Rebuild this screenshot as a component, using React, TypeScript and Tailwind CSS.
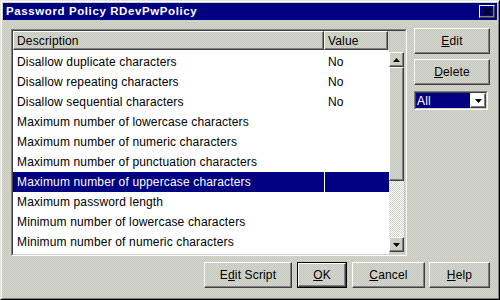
import React from "react";

const rows: { label: string; value?: string }[] = [
  { label: "Disallow duplicate characters", value: "No" },
  { label: "Disallow repeating characters", value: "No" },
  { label: "Disallow sequential characters", value: "No" },
  { label: "Maximum number of lowercase characters" },
  { label: "Maximum number of numeric characters" },
  { label: "Maximum number of punctuation characters" },
  { label: "Maximum number of uppercase characters" },
  { label: "Maximum password length" },
  { label: "Minimum number of lowercase characters" },
  { label: "Minimum number of numeric characters" },
];

const SELECTED = 6;

const raised =
  "border border-t-white border-l-white border-r-[#404040] border-b-[#404040] shadow-[inset_-1px_-1px_#808080]";

function Arrow({ up }: { up?: boolean }) {
  return (
    <svg width="7" height="4" viewBox="0 0 7 4">
      <polygon points={up ? "3.5,0 7,4 0,4" : "0,0 7,0 3.5,4"} fill="#000" />
    </svg>
  );
}

function Button({
  className,
  children,
  isDefault,
}: {
  className: string;
  children: React.ReactNode;
  isDefault?: boolean;
}) {
  if (isDefault) {
    return (
      <div className={`flex border border-black ${className}`}>
        <div className={`flex flex-1 items-center justify-center ${raised}`}>{children}</div>
      </div>
    );
  }
  return <div className={`flex items-center justify-center ${raised} ${className}`}>{children}</div>;
}

export default function App() {
  return (
    <div className="h-[300px] w-[500px] bg-[repeating-conic-gradient(#d6d8cf_0_25%,#c4c8bc_0_50%)] bg-[length:2px_2px] font-['Liberation_Sans',Arial,sans-serif] text-[12px] tracking-[0.15px] text-black">
      {/* window frame */}
      <div className="flex h-full flex-col border border-t-[#e4e4e0] border-l-[#e4e4e0] border-r-black border-b-black">
        <div className="flex flex-1 flex-col border border-t-white border-l-white border-r-[#808080] border-b-[#808080] p-px">
          {/* title bar */}
          <div className="flex h-[17px] items-center justify-between bg-[#000080] pl-[3px] pr-[2px]">
            <span className="text-[11.5px] font-bold tracking-[0.6px] text-white">Password Policy RDevPwPolicy</span>
            <div className={`flex h-[13px] w-[16px] items-center justify-center ${raised}`}>
              <svg width="8" height="7" viewBox="0 0 8 7">
                <path d="M0 0 L8 7 M1 0 L8 6 M0 1 L7 7 M8 0 L0 7 M7 0 L0 6 M8 1 L1 7" stroke="#000" strokeWidth="1" />
              </svg>
            </div>
          </div>

          {/* body */}
          <div className="flex flex-1 flex-col pl-[8px] pr-[7px] pt-[8px]">
            <div className="flex gap-[7px]">
              {/* table */}
              <div className="mt-px h-[227px] w-[396px] border border-t-[#808080] border-l-[#808080] border-r-white border-b-white">
                <div className="flex h-full flex-col border border-t-[#404040] border-l-[#404040] border-r-[#d4d0c8] border-b-[#d4d0c8]">
                  <div className="flex h-[19px]">
                    <div className={`flex w-[311px] items-center pl-[3px] ${raised}`}>Description</div>
                    <div className={`flex w-[64px] items-center pl-[3px] ${raised}`}>Value</div>
                    <div className="flex-1" />
                  </div>
                  <div className="flex flex-1">
                    <div className="flex w-[376px] flex-col bg-white pt-[2px]">
                      {rows.map((r, i) => (
                        <div
                          key={r.label}
                          className={`flex h-[20px] items-center ${i === SELECTED ? "bg-[#000080] text-white" : ""}`}
                        >
                          <div className="w-[311px] pl-[4px] whitespace-nowrap">{r.label}</div>
                          <div className={`h-full w-px ${i === SELECTED ? "bg-white" : ""}`} />
                          <div className="flex-1 pl-[3px]">{r.value}</div>
                        </div>
                      ))}
                    </div>
                    {/* scrollbar */}
                    <div className="flex w-[16px] flex-col py-[2px] pr-px">
                      <div className={`flex h-[15px] items-center justify-center ${raised}`}>
                        <Arrow up />
                      </div>
                      <div className={`h-[114px] ${raised}`} />
                      <div className="flex-1 bg-[repeating-conic-gradient(#ffffff_0_25%,#d0d0c8_0_50%)] bg-[length:2px_2px]" />
                      <div className={`flex h-[15px] items-center justify-center ${raised}`}>
                        <Arrow />
                      </div>
                    </div>
                  </div>
                </div>
              </div>

              {/* right column */}
              <div className="flex w-[76px] flex-col">
                <Button className="h-[26px]">
                  <span>
                    <u>E</u>dit
                  </span>
                </Button>
                <Button className="mt-[5px] h-[26px]">
                  <span>
                    <u>D</u>elete
                  </span>
                </Button>
                <div className="mt-[6px] flex h-[19px] w-[74px] border border-t-[#808080] border-l-[#808080] border-r-white border-b-white">
                  <div className="flex flex-1 border border-t-[#404040] border-l-[#404040] border-r-[#d4d0c8] border-b-[#d4d0c8] bg-white">
                    <div className="flex flex-1 items-center bg-[#000080] pl-[1px] text-white">All</div>
                    <div className={`flex w-[16px] items-center justify-center ${raised}`}>
                      <Arrow />
                    </div>
                  </div>
                </div>
              </div>
            </div>

            {/* bottom buttons */}
            <div className="mt-[6px] flex justify-end gap-[5px]">
              <Button className="h-[26px] w-[88px]">
                <span>
                  E<u>d</u>it Script
                </span>
              </Button>
              <Button isDefault className="h-[26px] w-[50px]">
                <span>
                  <u>O</u>K
                </span>
              </Button>
              <Button className="h-[26px] w-[73px]">
                <span>
                  <u>C</u>ancel
                </span>
              </Button>
              <Button className="ml-[-1px] h-[26px] w-[61px]">
                <span>
                  <u>H</u>elp
                </span>
              </Button>
            </div>
          </div>
        </div>
      </div>
    </div>
  );
}
